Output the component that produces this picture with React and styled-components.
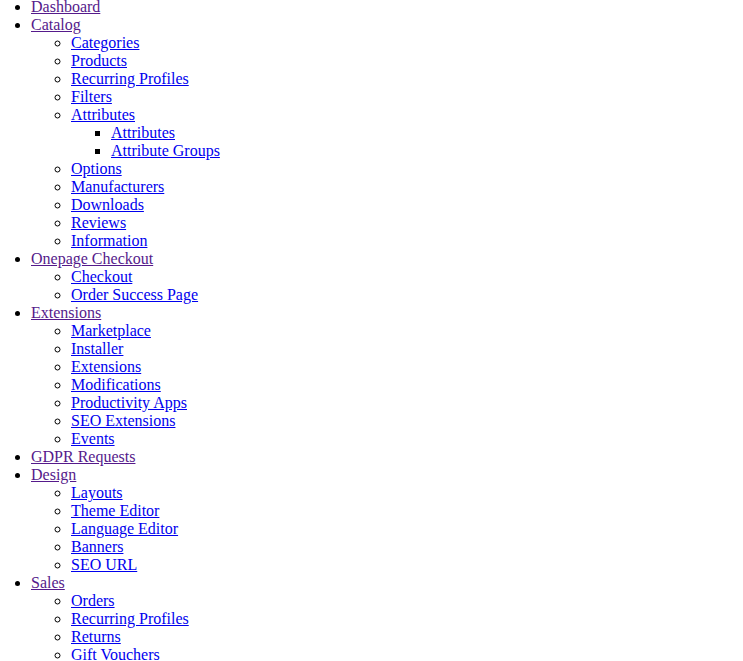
import React from "react";
import styled, { createGlobalStyle } from "styled-components";

const GlobalStyle = createGlobalStyle`
  body {
    margin: 0;
    background: #ffffff;
    font-family: "Liberation Serif", "Times New Roman", serif;
    font-size: 16px;
    line-height: 18px;
  }
`;

const Menu = styled.ul`
  margin: -2px 0 0 0;
  padding-left: 31px;
  list-style-type: disc;
`;

const SubMenu = styled.ul`
  margin: 0;
  padding-left: 40px;
  list-style-type: ${(p) => (p.$depth === 2 ? "square" : "circle")};
`;

const Item = styled.li`
  line-height: 18px;
`;

const Link = styled.a`
  color: ${(p) => (p.$visited ? "#551a8b" : "#0000ee")};
  text-decoration: underline;
`;

const menu = [
  { title: "Dashboard" },
  {
    title: "Catalog",
    children: [
      { title: "Categories" },
      { title: "Products" },
      { title: "Recurring Profiles" },
      { title: "Filters" },
      {
        title: "Attributes",
        children: [{ title: "Attributes" }, { title: "Attribute Groups" }],
      },
      { title: "Options" },
      { title: "Manufacturers" },
      { title: "Downloads" },
      { title: "Reviews" },
      { title: "Information" },
    ],
  },
  {
    title: "Onepage Checkout",
    children: [{ title: "Checkout" }, { title: "Order Success Page" }],
  },
  {
    title: "Extensions",
    children: [
      { title: "Marketplace" },
      { title: "Installer" },
      { title: "Extensions" },
      { title: "Modifications" },
      { title: "Productivity Apps" },
      { title: "SEO Extensions" },
      { title: "Events" },
    ],
  },
  { title: "GDPR Requests" },
  {
    title: "Design",
    children: [
      { title: "Layouts" },
      { title: "Theme Editor" },
      { title: "Language Editor" },
      { title: "Banners" },
      { title: "SEO URL" },
    ],
  },
  {
    title: "Sales",
    children: [
      { title: "Orders" },
      { title: "Recurring Profiles" },
      { title: "Returns" },
      { title: "Gift Vouchers" },
    ],
  },
];

const MenuItem = ({ item, depth }) => (
  <Item>
    <Link href="#" $visited={depth === 0}>
      {item.title}
    </Link>
    {item.children && (
      <SubMenu $depth={depth + 1}>
        {item.children.map((child, i) => (
          <MenuItem key={i} item={child} depth={depth + 1} />
        ))}
      </SubMenu>
    )}
  </Item>
);

const App = () => {
  return (
    <>
      <GlobalStyle />
      <Menu>
        {menu.map((item, i) => (
          <MenuItem key={i} item={item} depth={0} />
        ))}
      </Menu>
    </>
  );
};

export default App;
